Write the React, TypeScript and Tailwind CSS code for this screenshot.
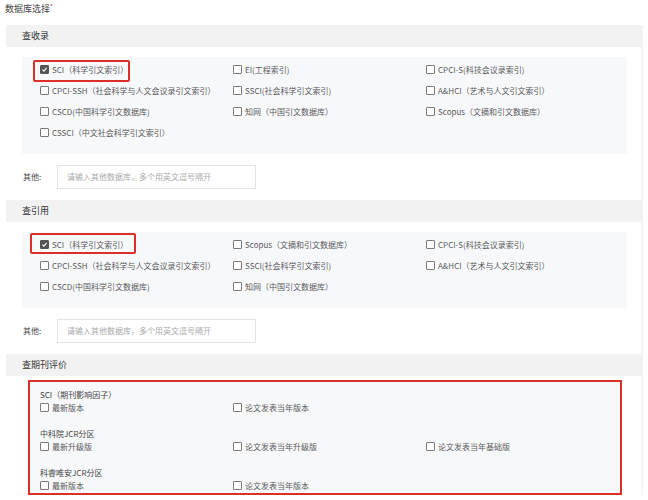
import type { ReactNode } from "react";

type Item = { label: string; checked?: boolean; mark?: string };

const collect: Item[] = [
  { label: "SCI（科学引文索引）", checked: true, mark: "left-[-7px] top-[1px] w-[97px] h-[22px]" },
  { label: "EI(工程索引)" },
  { label: "CPCI-S(科技会议录索引)" },
  { label: "CPCI-SSH（社会科学与人文会议录引文索引）" },
  { label: "SSCI(社会科学引文索引)" },
  { label: "A&HCI（艺术与人文引文索引）" },
  { label: "CSCD(中国科学引文数据库)" },
  { label: "知网（中国引文数据库）" },
  { label: "Scopus（文摘和引文数据库）" },
  { label: "CSSCI（中文社会科学引文索引）" },
];

const cited: Item[] = [
  { label: "SCI（科学引文索引）", checked: true, mark: "left-[-10px] top-[-1px] w-[106px] h-[21px]" },
  { label: "Scopus（文摘和引文数据库）" },
  { label: "CPCI-S(科技会议录索引)" },
  { label: "CPCI-SSH（社会科学与人文会议录引文索引）" },
  { label: "SSCI(社会科学引文索引)" },
  { label: "A&HCI（艺术与人文引文索引）" },
  { label: "CSCD(中国科学引文数据库)" },
  { label: "知网（中国引文数据库）" },
];

const journal = [
  { title: "SCI（期刊影响因子）", items: ["最新版本", "论文发表当年版本"] },
  { title: "中科院JCR分区", items: ["最新升级版", "论文发表当年升级版", "论文发表当年基础版"] },
  { title: "科睿唯安JCR分区", items: ["最新版本", "论文发表当年版本"] },
];

const Box = ({ checked }: { checked?: boolean }) => (
  <span
    className={`flex items-center justify-center w-[9px] h-[9px] shrink-0 rounded-[1px] border ${
      checked ? "bg-[#555] border-[#555]" : "bg-white border-[#7a7a7a]"
    }`}
  >
    {checked && (
      <svg viewBox="0 0 10 10" className="w-[7px] h-[7px]">
        <path d="M2 5.2 4.2 7.3 8 2.8" fill="none" stroke="#fff" strokeWidth="1.6" />
      </svg>
    )}
  </span>
);

const Check = ({ label, checked, mark }: Item) => (
  <div className="relative flex items-center gap-[3px] h-[21px] text-[8px] text-[#5a5a5a] whitespace-nowrap">
    {mark && <span className={`absolute ${mark} border-2 border-[#dc2f2a] rounded-[2px]`} />}
    <Box checked={checked} />
    <span>{label}</span>
  </div>
);

const Header = ({ children }: { children: ReactNode }) => (
  <div className="flex items-center h-[22px] pl-[16px] bg-[#f2f2f2] text-[9px] text-[#333]">{children}</div>
);

const Other = () => (
  <div className="flex items-center h-[24px] my-[11px] pl-[17px]">
    <span className="w-[34px] text-[8px] text-[#444]">其他:</span>
    <div className="flex items-center w-[199px] h-[24px] pl-[9px] border border-[#e2e2e2] bg-white text-[8px] text-[#aaa]">
      请输入其他数据库，多个用英文逗号隔开
    </div>
  </div>
);

const Grid = ({ items }: { items: Item[] }) => (
  <div className="ml-[16px] w-[605px] bg-[#f7f8fa] pl-[18px] pt-[2px] pb-[11px]">
    <div className="grid grid-cols-[193px_193px_193px]">
      {items.map((it, i) => (
        <Check key={i} {...it} />
      ))}
    </div>
  </div>
);

export default function App() {
  return (
    <div
      className="w-[648px] h-[500px] bg-white overflow-hidden"
      style={{ fontFamily: '"Noto Sans CJK SC", "Noto Sans", sans-serif' }}
    >
      <div className="h-[18px] pl-[5px] pt-[2px] text-[9px] text-[#444]">
        数据库选择<sup className="text-[#e0302a] text-[6px]">*</sup>
      </div>
      <div className="ml-[6px] mr-[5px] mt-[7px] border-r-2 border-[#f4f4f4]">
        <Header>查收录</Header>
        <div className="h-[10px]" />
        <Grid items={collect} />
        <Other />

        <Header>查引用</Header>
        <div className="h-[10px]" />
        <Grid items={cited} />
        <Other />

        <Header>查期刊评价</Header>
        <div className="ml-[22px] mt-[4px] w-[594px] h-[115px] border-2 border-[#dc2f2a] bg-[#f7f8fa] pl-[10px] pt-[7px] flex flex-col gap-[14px]">
          {journal.map((g, i) => (
            <div key={i}>
              <div className="h-[12px] leading-[12px] text-[8px] text-[#444]">{g.title}</div>
              <div className="grid grid-cols-[193px_193px_193px]">
                {g.items.map((t, j) => (
                  <div key={j} className="flex items-center gap-[3px] h-[13px] text-[8px] text-[#5a5a5a] whitespace-nowrap">
                    <Box />
                    <span>{t}</span>
                  </div>
                ))}
              </div>
            </div>
          ))}
        </div>
      </div>
    </div>
  );
}
